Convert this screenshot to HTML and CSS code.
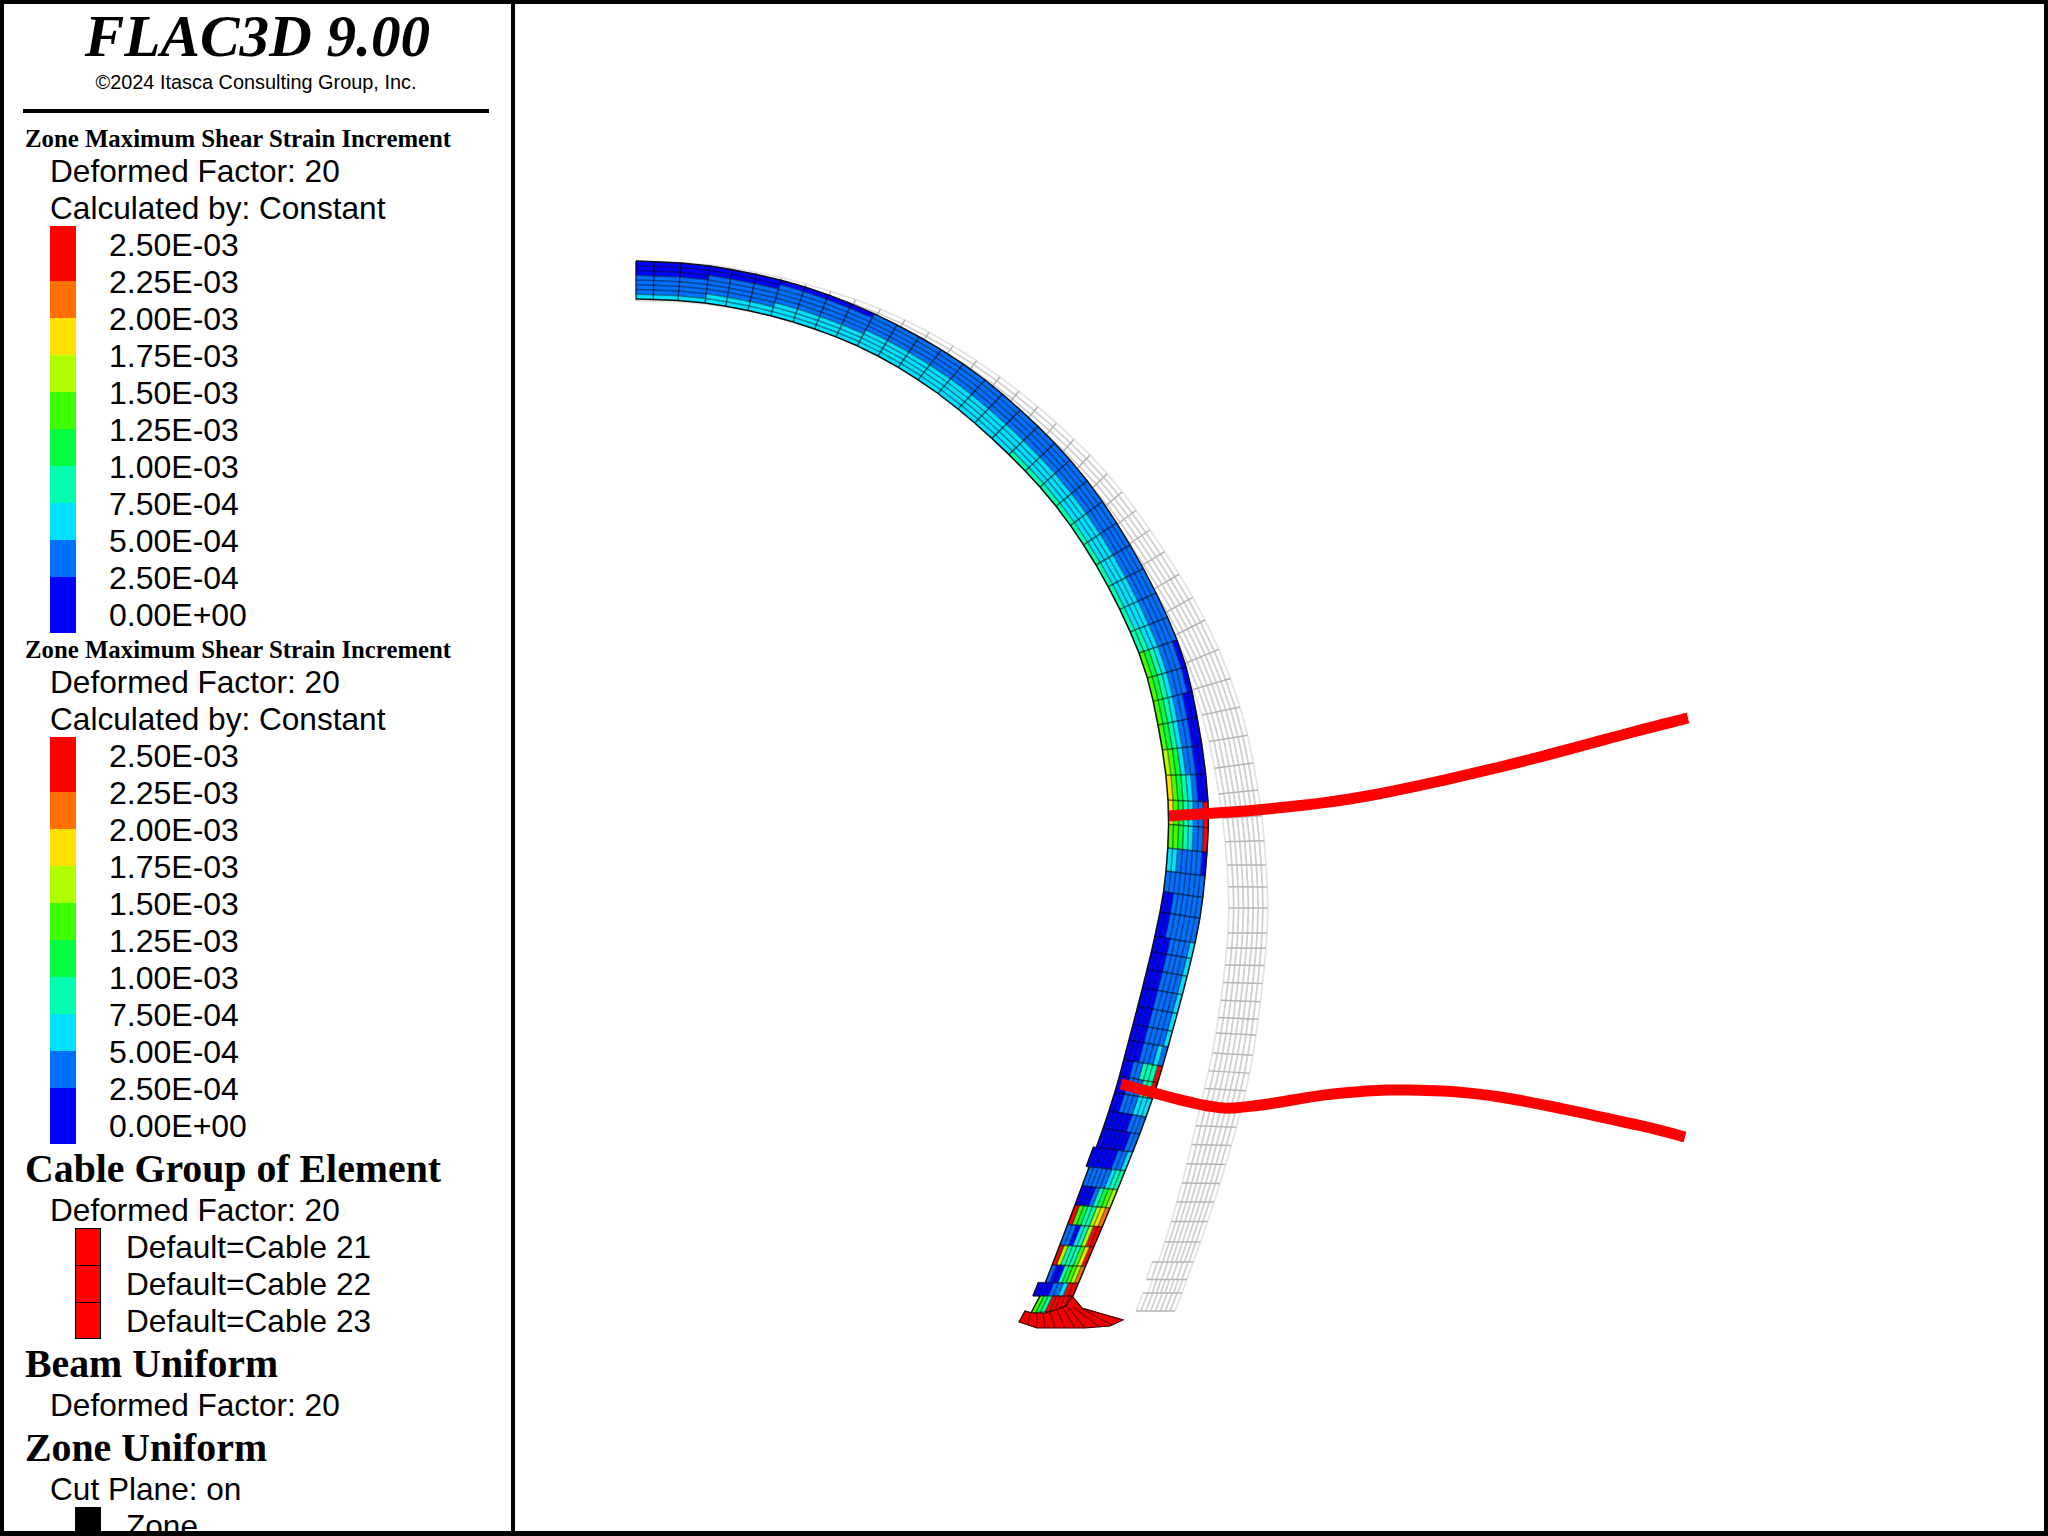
FILE: index.html
```html
<!DOCTYPE html>
<html lang="en">
<head>
    <meta charset="UTF-8">
    <title>FLAC3D 9.00</title>
    <link rel="stylesheet" href="styles.css">
</head>
<body>

    <div class="frame">
        <div class="sidebar">
            <div class="title">FLAC3D 9.00</div>
            <div class="copyright">©2024 Itasca Consulting Group, Inc.</div>
            <div class="rule"></div>

            <div class="heading-small">Zone Maximum Shear Strain Increment</div>
            <div class="row">Deformed Factor: 20</div>
            <div class="row">Calculated by: Constant</div>
            <div class="legend">
                <div class="bar">
                    <div class="c9 first"></div>
                    <div class="c8"></div>
                    <div class="c7"></div>
                    <div class="c6"></div>
                    <div class="c5"></div>
                    <div class="c4"></div>
                    <div class="c3"></div>
                    <div class="c2"></div>
                    <div class="c1"></div>
                    <div class="c0 last"></div>
                </div>
                <div class="values">
                    <div>2.50E-03</div>
                    <div>2.25E-03</div>
                    <div>2.00E-03</div>
                    <div>1.75E-03</div>
                    <div>1.50E-03</div>
                    <div>1.25E-03</div>
                    <div>1.00E-03</div>
                    <div>7.50E-04</div>
                    <div>5.00E-04</div>
                    <div>2.50E-04</div>
                    <div>0.00E+00</div>
                </div>
            </div>

            <div class="heading-small">Zone Maximum Shear Strain Increment</div>
            <div class="row">Deformed Factor: 20</div>
            <div class="row">Calculated by: Constant</div>
            <div class="legend">
                <div class="bar">
                    <div class="c9 first"></div>
                    <div class="c8"></div>
                    <div class="c7"></div>
                    <div class="c6"></div>
                    <div class="c5"></div>
                    <div class="c4"></div>
                    <div class="c3"></div>
                    <div class="c2"></div>
                    <div class="c1"></div>
                    <div class="c0 last"></div>
                </div>
                <div class="values">
                    <div>2.50E-03</div>
                    <div>2.25E-03</div>
                    <div>2.00E-03</div>
                    <div>1.75E-03</div>
                    <div>1.50E-03</div>
                    <div>1.25E-03</div>
                    <div>1.00E-03</div>
                    <div>7.50E-04</div>
                    <div>5.00E-04</div>
                    <div>2.50E-04</div>
                    <div>0.00E+00</div>
                </div>
            </div>

            <div class="heading">Cable Group of Element</div>
            <div class="row">Deformed Factor: 20</div>
            <div class="key"><span class="swatch red"></span>Default=Cable 21</div>
            <div class="key"><span class="swatch red"></span>Default=Cable 22</div>
            <div class="key"><span class="swatch red"></span>Default=Cable 23</div>

            <div class="heading">Beam Uniform</div>
            <div class="row">Deformed Factor: 20</div>

            <div class="heading">Zone Uniform</div>
            <div class="row">Cut Plane: on</div>
            <div class="key"><span class="swatch black"></span>Zone</div>
        </div>

        <div class="view">
            <svg class="plot" viewBox="515 4 1529 1527">
                <g id="ghost"></g>
                <g id="mesh"></g>

                <polygon class="foot" points="1072,1296 1082,1308 1123,1320 1110,1326 1085,1328 1037,1328 1019,1322 1025,1311 1032,1313 1045,1313 1056,1310 1066,1306"/>
                <path class="foot-lines" d="M1030 1314L1028 1325M1037 1313L1037 1328M1043 1313L1045 1328M1050 1312L1055 1328M1057 1310L1065 1328M1063 1308L1075 1328M1068 1307L1085 1328M1073 1307L1100 1327M1080 1308L1112 1325M1083 1309L1123 1320"/>

                <g id="cables"></g>
            </svg>
        </div>
    </div>

    <script src="mesh.js"></script>
</body>
</html>
```

FILE: styles.css
```css
* {
    box-sizing: border-box;
}

body {
    margin: 0;
    background: #ffffff;
    color: #000000;
    font-family: "Liberation Sans", Arial, sans-serif;
}

.frame {
    display: flex;
    height: 100vh;
    border: 4px solid #000000;
    border-bottom-width: 5px;
    overflow: hidden;
}

/* Legend column */
.sidebar {
    flex: 0 0 511px;
    border-right: 4px solid #000000;
    overflow: hidden;
    white-space: nowrap;
}

.title {
    height: 59px;
    margin-top: 4px;
    line-height: 56px;
    text-align: center;
    font-family: "Liberation Serif", "Times New Roman", serif;
    font-size: 59.2px;
    font-weight: bold;
    font-style: italic;
}

.copyright {
    height: 30px;
    padding-right: 3px;
    line-height: 30px;
    text-align: center;
    font-size: 19.9px;
}

.rule {
    height: 4px;
    margin: 12px 22px 9px 19px;
    background: #000000;
}

.heading-small {
    height: 30px;
    padding-left: 21px;
    line-height: 33px;
    font-family: "Liberation Serif", "Times New Roman", serif;
    font-size: 24.8px;
    font-weight: bold;
}

.heading {
    height: 47px;
    padding-left: 21px;
    line-height: 51px;
    font-family: "Liberation Serif", "Times New Roman", serif;
    font-size: 39.8px;
    font-weight: bold;
}

.row {
    height: 37px;
    padding-left: 46px;
    line-height: 38px;
    font-size: 31.6px;
}

.legend {
    display: flex;
    margin-left: 46px;
}

.bar {
    width: 26px;
}

.bar div {
    height: 37px;
}

.bar .first {
    height: 55px;
}

.bar .last {
    height: 56px;
}

.values {
    margin-left: 33px;
    font-size: 32px;
}

.values div {
    height: 37px;
    line-height: 38px;
}

.c9 { background: #ff0000; }
.c8 { background: #ff7000; }
.c7 { background: #ffe000; }
.c6 { background: #b0ff00; }
.c5 { background: #40ff00; }
.c4 { background: #00ff40; }
.c3 { background: #00ffb0; }
.c2 { background: #00e0ff; }
.c1 { background: #0070ff; }
.c0 { background: #0000ff; }

.key {
    display: flex;
    height: 37px;
    padding-left: 71px;
    line-height: 38px;
    font-size: 31.6px;
}

.swatch {
    flex: 0 0 26px;
    margin-right: 25px;
    border: 1px solid #000000;
    border-bottom: 0;
}

.key:has(+ .heading) .swatch {
    border-bottom: 1px solid #000000;
}

.swatch.red {
    background: #ff0000;
}

.swatch.black {
    background: #000000;
}

/* Model view */
.view {
    flex: 1;
    min-width: 0;
}

.plot {
    display: block;
    width: 100%;
    height: 100%;
}

.foot {
    fill: #f00000;
    stroke: #300000;
    stroke-width: 1.2;
}

.foot-lines {
    fill: none;
    stroke: #7a0000;
    stroke-width: 1.2;
}

.cable {
    fill: none;
    stroke: #ff0000;
    stroke-width: 11;
}

.ghost-long {
    fill: none;
    stroke: #d0d0d0;
    stroke-width: 1.8;
}

.ghost-edge {
    fill: none;
    stroke: #e4e4e4;
    stroke-width: 1.8;
}

.ghost-cross {
    stroke: #b4b4b4;
    stroke-width: 1.5;
}

.mesh-long {
    fill: none;
    stroke: rgba(0, 0, 0, 0.42);
    stroke-width: 1.5;
}

.mesh-cross {
    stroke: rgba(0, 0, 0, 0.55);
    stroke-width: 1.5;
}

.mesh-edge {
    fill: none;
    stroke: #101010;
    stroke-width: 1.5;
}
```

FILE: mesh.js
```js
const LAYERS = 8;
const COLORS = ['#0000ff', '#0070ff', '#00e0ff', '#00ffb0', '#00ff40', '#40ff00', '#b0ff00', '#ffe000', '#ff7000', '#ff0000'];

// cells between one key station and the next
const COUNTS = [3, 4, 4, 4, 5, 4, 4, 3, 3, 3, 3, 6, 4, 5, 5, 1];

// key stations: outer x, outer y, inner x, inner y
const MESH_KEYS = [
    [636, 261, 636, 299],
    [710, 266, 705, 303],
    [805, 287, 793, 322],
    [897, 325, 878, 356],
    [985, 380, 958, 409],
    [1070, 460, 1040, 487],
    [1130, 545, 1096, 565],
    [1177, 640, 1139, 653],
    [1197, 717, 1158, 725],
    [1208, 802, 1168, 800],
    [1205, 876, 1166, 871],
    [1195, 943, 1155, 936],
    [1168, 1047, 1129, 1040],
    [1146, 1117, 1109, 1111],
    [1110, 1208, 1075, 1205],
    [1073, 1296, 1040, 1296],
    [1068, 1310, 1031, 1313]
];

const GHOST_KEYS = [
    [636, 262, 636, 301],
    [710, 265, 706, 304],
    [806, 284, 797, 322],
    [905, 320, 885, 352],
    [1000, 377, 975, 408],
    [1090, 455, 1062, 485],
    [1150, 530, 1117, 552],
    [1205, 620, 1170, 638],
    [1240, 707, 1202, 715],
    [1258, 790, 1219, 794],
    [1266, 865, 1227, 865],
    [1267, 933, 1228, 933],
    [1256, 1035, 1216, 1033],
    [1241, 1110, 1200, 1108],
    [1214, 1202, 1177, 1202],
    [1182, 1293, 1148, 1293],
    [1175, 1311, 1141, 1311]
];

// inner edge steps, row index -> dx
const MESH_STEPS = { 52: -3, 59: -7 };
const GHOST_STEPS = { 58: -6, 60: -5 };

// [rows, contour band of each layer from outer to inner]
const BANDS = [
    [3, '00011112'],
    [3, '00111122'],
    [4, '01111222'],
    [8, '11112222'],
    [9, '11112223'],
    [1, '11112233'],
    [2, '01112345'],
    [2, '00112345'],
    [1, '00112456'],
    [1, '00123457'],
    [1, '91123457'],
    [1, '91123455'],
    [1, '01111122'],
    [1, '11111111'],
    [2, '11111100'],
    [6, '21111000'],
    [1, '12111000'],
    [1, '93331100'],
    [1, '93311100'],
    [1, '22211100'],
    [1, '11100000'],
    [1, '11000000'],
    [1, '21100000'],
    [1, '33211111'],
    [1, '65431000'],
    [1, '87633459'],
    [1, '99632011'],
    [1, '97533369'],
    [1, '86543001'],
    [1, '99211000'],
    [1, '99999345']
];

const CABLES = [
    [[1169, 816], [1267, 809], [1367, 796], [1500, 767], [1633, 732], [1688, 718]],
    [[1121, 1084], [1208, 1106], [1253, 1106], [1333, 1094], [1410, 1090], [1500, 1097], [1633, 1124], [1685, 1137]]
];

function spline(a, b, c, d, t) {
    return 0.5 * (2 * b + (c - a) * t + (2 * a - 5 * b + 4 * c - d) * t * t + (3 * b - a - 3 * c + d) * t * t * t);
}

// samples the curve through keys, with counts[i] steps between keys i and i+1
function sampleCurve(keys, counts) {
    const samples = [];
    counts.forEach((count, i) => {
        const p0 = keys[Math.max(i - 1, 0)];
        const p1 = keys[i];
        const p2 = keys[i + 1];
        const p3 = keys[Math.min(i + 2, keys.length - 1)];
        for (let j = 0; j < count; j++) {
            const t = j / count;
            samples.push(p1.map((_, k) => spline(p0[k], p1[k], p2[k], p3[k], t)));
        }
    });
    samples.push(keys[keys.length - 1]);
    return samples;
}

// point at layer position f (0 outer, 1 inner) on a station
function across(station, f, dx) {
    return [
        station[0] + (station[2] + dx - station[0]) * f,
        station[1] + (station[3] - station[1]) * f
    ];
}

function pointText(p) {
    return p[0].toFixed(1) + ',' + p[1].toFixed(1);
}

function addShape(group, tag, attrs) {
    const el = document.createElementNS('http://www.w3.org/2000/svg', tag);
    Object.keys(attrs).forEach(name => el.setAttribute(name, attrs[name]));
    group.appendChild(el);
}

function rowColors() {
    const rows = [];
    BANDS.forEach(band => {
        for (let i = 0; i < band[0]; i++) rows.push(band[1]);
    });
    return rows;
}

function drawLines(group, stations, steps, longClass, edgeClass, crossClass) {
    const rows = stations.length - 1;

    // lines along the shell, broken into one piece per row because of the steps
    for (let layer = 0; layer <= LAYERS; layer++) {
        const f = layer / LAYERS;
        const cls = layer === 0 || layer === LAYERS ? edgeClass : longClass;
        for (let r = 0; r < rows; r++) {
            const dx = steps[r] || 0;
            const a = across(stations[r], f, dx);
            const b = across(stations[r + 1], f, dx);
            addShape(group, 'polyline', { class: cls, points: pointText(a) + ' ' + pointText(b) });
        }
    }

    // lines across the shell
    for (let r = 0; r <= rows; r++) {
        const dx = Math.min(steps[r] || 0, steps[r - 1] || 0);
        const a = across(stations[r], 0, 0);
        const b = across(stations[r], 1, dx);
        addShape(group, 'line', { class: crossClass, x1: a[0], y1: a[1], x2: b[0], y2: b[1] });
    }
}

function drawGhost() {
    const stations = sampleCurve(GHOST_KEYS, COUNTS);
    drawLines(document.getElementById('ghost'), stations, GHOST_STEPS, 'ghost-long', 'ghost-edge', 'ghost-cross');
}

function drawMesh() {
    const group = document.getElementById('mesh');
    const stations = sampleCurve(MESH_KEYS, COUNTS);
    const colors = rowColors();

    for (let r = 0; r < stations.length - 1; r++) {
        const dx = MESH_STEPS[r] || 0;
        for (let layer = 0; layer < LAYERS; layer++) {
            const f0 = layer / LAYERS;
            const f1 = (layer + 1) / LAYERS;
            const color = COLORS[Number(colors[r][layer])];
            const points = [
                across(stations[r], f0, dx),
                across(stations[r], f1, dx),
                across(stations[r + 1], f1, dx),
                across(stations[r + 1], f0, dx)
            ].map(pointText).join(' ');
            addShape(group, 'polygon', { points: points, fill: color, stroke: color, 'stroke-width': 0.5 });
        }
    }

    drawLines(group, stations, MESH_STEPS, 'mesh-long', 'mesh-edge', 'mesh-cross');
}

function drawCables() {
    const group = document.getElementById('cables');
    CABLES.forEach(keys => {
        const counts = keys.slice(1).map(() => 10);
        const points = sampleCurve(keys, counts).map(pointText).join(' ');
        addShape(group, 'polyline', { class: 'cable', points: points });
    });
}

drawGhost();
drawMesh();
drawCables();
```
